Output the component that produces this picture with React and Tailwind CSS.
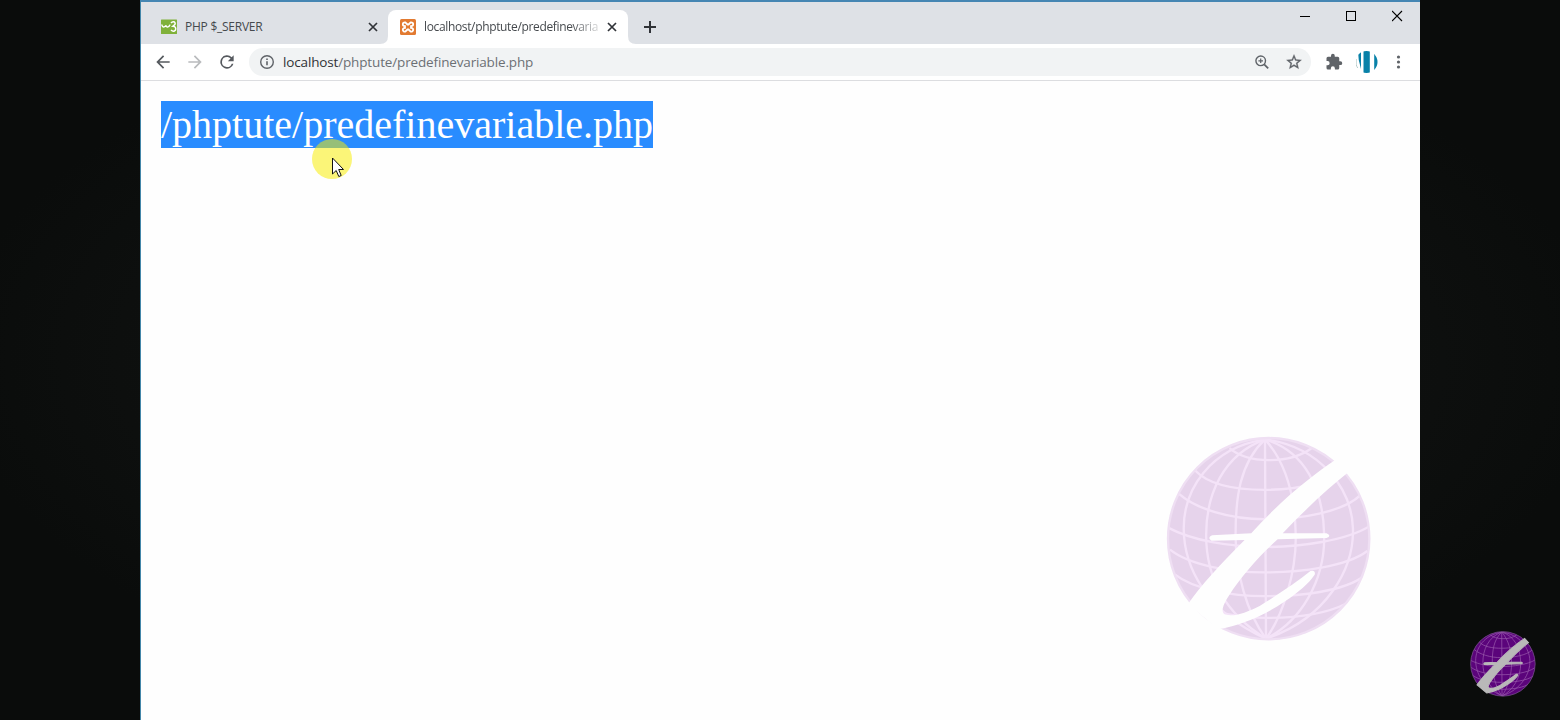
import React from "react";

function Globe({ className, fill, line, mark, rim, id, markStroke }) {
  return (
    <svg className={className} viewBox="50 34 616 616" fill="none">
      <clipPath id={id}>
        <circle cx="357" cy="341" r="303" />
      </clipPath>
      <circle cx="357" cy="341" r="302" fill={fill} />
      <g clipPath={`url(#${id})`} stroke={line} strokeWidth="7">
        <path d="M240 70Q280 105 358 106T486 70" />
        <path d="M138 138C180 182 260 195 345 195S520 180 580 135" />
        <path d="M88 206C140 252 240 283 345 283S580 262 632 210" />
        <path d="M56 308C130 347 240 366 345 366S590 347 660 303" />
        <path d="M62 374C120 420 240 442 345 442S590 425 652 378" />
        <path d="M76 448C130 490 240 513 345 513S580 500 644 452" />
        <path d="M130 535C210 568 280 578 350 578S520 570 590 535" />
        <path d="M346 44L349 640" />
        <path d="M346 44C270 115 258 220 258 330S290 560 349 640" />
        <path d="M346 44C220 90 170 210 170 330S220 560 349 640" />
        <path d="M346 44C180 70 103 195 103 310S170 560 349 640" />
        <path d="M346 44C410 115 436 220 438 330S400 570 349 640" />
        <path d="M346 44C465 80 520 190 523 330S450 590 349 640" />
        <path d="M346 44C510 65 605 190 609 310S530 580 349 640" />
      </g>
      <circle cx="357" cy="341" r="301" stroke={rim} strokeWidth="7" />
      <path
        fill={mark}
        stroke={mark}
        strokeWidth={markStroke}
        d="M560 103C478 158 385 235 305 325L188 331Q172 338 186 347L285 345C215 415 155 480 116 536L206 612C275 600 345 570 405 529C445 502 478 474 495 448Q497 434 482 438C440 472 390 505 330 542C290 562 255 575 228 568C212 562 220 540 237 513C278 450 330 392 384 343L530 339Q547 332 530 325L399 325C460 260 530 195 596 142Z"
      />
    </svg>
  );
}

const Close = ({ className }) => (
  <svg className={className} viewBox="0 0 10 10" stroke="currentColor" strokeWidth="1.7">
    <path d="M1 1L9 9M9 1L1 9" />
  </svg>
);

function Tabs() {
  return (
    <div className="flex h-[42px] items-end bg-[#dee1e6] font-['Open_Sans',sans-serif] text-[12px] text-[#45494d]">
      <div className="flex h-[34px] w-[247px] items-center pl-5 pr-[10px]">
        <svg className="h-4 w-4 shrink-0" viewBox="0 0 16 16" fill="none">
          <rect y="0.5" width="16" height="14.5" rx="0.5" fill="#80b13a" />
          <path d="M0.800 5.500q.5 3 2.300 2.400t1.700-1.700q.5 2.300 2.200 1.700t2-2.300" stroke="#fff" strokeWidth="1.400" />
          <path d="M10 4q1.500-2 3.500-1 2 2-1.500 4.200 3.500.5 2.500 3.800-2 2.500-4.500 0" stroke="#fff" strokeWidth="1.500" />
        </svg>
        <span className="ml-2 flex-1 whitespace-nowrap tracking-[-0.25px]">PHP $_SERVER</span>
        <Close className="h-[10px] w-[10px] text-[#303338]" />
      </div>
      <div className="relative flex h-[34px] w-[240px] items-center rounded-t-lg bg-white pl-3 pr-[11px]">
        <svg className="absolute -left-2 bottom-0 h-2 w-2" viewBox="0 0 8 8"><path d="M8 0V8H0Q8 8 8 0" fill="#fff" /></svg>
        <svg className="absolute -right-2 bottom-0 h-2 w-2" viewBox="0 0 8 8"><path d="M0 0V8H8Q0 8 0 0" fill="#fff" /></svg>
        <svg className="h-4 w-4 shrink-0" viewBox="0 0 16 16" fill="none">
          <rect width="16" height="16" rx="1.500" fill="#e27a31" />
          <path d="M5.500 3.500C2 3 2 7 5 7.200V8.800C2 9 2 13 5.500 12.500L7.500 10.500H8.500L10.500 12.500C14 13 14 9 11 8.800V7.200C14 7 14 3 10.500 3.500L8.500 5.500H7.500Z" stroke="#fff" strokeWidth="1.800" />
        </svg>
        <span className="ml-2 w-[176px] overflow-hidden whitespace-nowrap tracking-[-0.35px] [mask-image:linear-gradient(to_right,black_83%,rgba(0,0,0,0.15))]">localhost/phptute/predefinevaria</span>
        <Close className="ml-auto h-[10px] w-[10px] shrink-0 text-[#303338]" />
      </div>
      <svg className="mb-[11px] ml-4 h-3 w-3 text-[#303338]" viewBox="0 0 12 12" stroke="currentColor" strokeWidth="2"><path d="M6 0V12M0 6H12" /></svg>
      <div className="ml-auto mr-[17px] flex h-full items-start gap-[35px] pt-[8px] text-black">
        <svg className="h-3 w-[11px]" viewBox="0 0 11 12" stroke="currentColor"><path d="M0 6.500H10" /></svg>
        <svg className="h-3 w-[11px]" viewBox="0 0 11 12" fill="none" stroke="currentColor"><rect x="0.500" y="1.500" width="9" height="9" /></svg>
        <svg className="h-3 w-[11px]" viewBox="0 0 11 12" stroke="currentColor" strokeWidth="1.100"><path d="M0 1L10 11M10 1L0 11" /></svg>
      </div>
    </div>
  );
}

function Toolbar() {
  return (
    <div className="flex h-[37px] items-center border-b border-[#dcdde0] bg-white pl-[12px] text-[#5f6368]">
      <svg className="h-5 w-5 text-[#55595e]" viewBox="0 0 24 24" fill="currentColor"><path d="M20 11H7.800l5.600-5.600L12 4l-8 8 8 8 1.400-1.400L7.800 13H20z" /></svg>
      <svg className="ml-3 h-5 w-5 text-[#b9bbbd]" viewBox="0 0 24 24" fill="currentColor"><path d="M4 11h12.200l-5.600-5.600L12 4l8 8-8 8-1.400-1.400 5.600-5.600H4z" /></svg>
      <svg className="ml-3 h-5 w-5 text-[#55595e]" viewBox="0 0 24 24" fill="currentColor"><path d="M17.650 6.350A8 8 0 1 0 19.730 14h-2.080A6 6 0 1 1 12 6c1.660 0 3.140.69 4.220 1.780L13 11h7V4z" /></svg>
      <div className="ml-[12px] flex h-7 w-[1062px] items-center rounded-full bg-[#f1f3f4] pl-[10px] pr-2">
        <svg className="h-4 w-4" viewBox="0 0 16 16" fill="none" stroke="currentColor" strokeWidth="1.400"><circle cx="8" cy="8" r="6.300" /><path d="M8 7.200V11.300M8 4.600V6" strokeWidth="1.600" /></svg>
        <span className="ml-2 whitespace-nowrap font-['Open_Sans',sans-serif] text-[13.500px] tracking-[-0.150px] text-[#6c7074]"><span className="text-[#303236]">localhost</span>/phptute/predefinevariable.php</span>
        <svg className="ml-auto h-4 w-4" viewBox="0 0 16 16" fill="none" stroke="currentColor" strokeWidth="1.400"><circle cx="6.700" cy="6.800" r="4.800" /><path d="M10.200 10.300L14.200 14.300" strokeWidth="1.800" /><path d="M6.700 4.500V9.100M4.400 6.800H9" strokeWidth="1.200" /></svg>
        <svg className="ml-[15px] h-[18px] w-[18px]" viewBox="0 0 24 24" fill="currentColor" stroke="currentColor" strokeWidth=".4"><path d="M22 9.240l-7.190-.62L12 2 9.190 8.630 2 9.240l5.460 4.730L5.820 21 12 17.270 18.180 21l-1.630-7.030zM12 15.400l-3.760 2.270 1-4.280-3.320-2.880 4.380-.38L12 6.100l1.710 4.040 4.380.38-3.320 2.880 1 4.280z" /></svg>
      </div>
      <svg className="ml-[14px] h-[18px] w-[18px]" viewBox="0 0 24 24" fill="currentColor"><path d="M20.500 11H19V7a2 2 0 0 0-2-2h-4V3.500a2.500 2.500 0 0 0-5 0V5H4a2 2 0 0 0-2 2v3.800h1.500a2.700 2.700 0 0 1 0 5.400H2V20a2 2 0 0 0 2 2h3.800v-1.500a2.700 2.700 0 0 1 5.400 0V22H17a2 2 0 0 0 2-2v-4h1.500a2.500 2.500 0 0 0 0-5z" /></svg>
      <svg className="ml-[13px] h-[22px] w-[22px]" viewBox="0 0 22 22"><clipPath id="avatar"><circle cx="10.500" cy="11" r="11" /></clipPath><g clipPath="url(#avatar)"><rect width="22" height="22" fill="#fff" /><path d="M2 0H5V18Q2 9 2 0M7.500 0H13.800V22H7.500ZM18.200 0H22V22H18.200Z" fill="#0881a8" /><path d="M0 8V14L1.500 17" stroke="#8aa" fill="none" strokeWidth=".8" /></g></svg>
      <svg className="ml-[11px] h-[18px] w-[18px]" viewBox="0 0 18 18" fill="currentColor"><circle cx="9.500" cy="4" r="1.600" /><circle cx="9.500" cy="9" r="1.600" /><circle cx="9.500" cy="14" r="1.600" /></svg>
    </div>
  );
}

export default function App() {
  return (
    <div className="relative h-[720px] w-[1560px] overflow-hidden bg-[#0c0e0d] bg-[radial-gradient(ellipse_at_center,#0e100f_55%,#0a0c0b_75%)] px-[140px]">
      <main className="flex h-full flex-col border-l border-t-2 border-l-[#4386a9] border-t-[#4586b3] bg-[#fefefe]">
        <Tabs />
        <Toolbar />
        <div className="flex-1 pl-5 pt-5">
          <span className="block h-[47px] w-[492px] whitespace-nowrap bg-[#298cff] font-['Liberation_Serif',serif] text-[40px] leading-[48px] text-white">/phptute/predefinevariable.php</span>
        </div>
      </main>
      <div className="absolute left-[312px] top-[139px] h-10 w-10 rounded-full bg-[#f8ec00]/53" />
      <svg className="absolute left-[331px] top-[157px] h-[21px] w-[14px]" viewBox="0 0 14 21"><path d="M1.500 1V17L5.200 13.500L7.800 19.500L10.200 18.500L7.700 12.500H12.500Z" fill="#fff" stroke="#111" strokeWidth="1" /></svg>
      <Globe id="globe-large" className="absolute left-[1166px] top-[436px] h-[206px] w-[206px]" fill="#e6d3eb" line="#f4e3f8" rim="#efdff3" mark="#fefefe" markStroke="0" />
      <Globe id="globe-small" className="absolute left-[1470px] top-[631px] h-[66px] w-[66px]" fill="#5b047b" line="#9556a9" rim="#76518a" mark="#b9b9b9" markStroke="10" />
    </div>
  );
}
